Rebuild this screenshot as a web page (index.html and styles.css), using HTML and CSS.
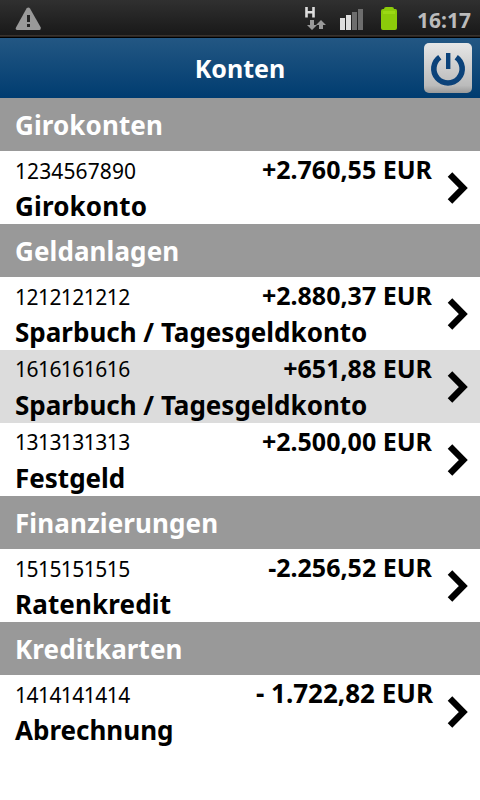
FILE: index.html
```html
<!DOCTYPE html>
<html lang="de">
<head>
    <meta charset="UTF-8">
    <meta name="viewport" content="width=device-width, initial-scale=1.0">
    <title>Konten</title>
    <link rel="stylesheet" href="styles.css">
</head>
<body>
    <!-- Status Bar -->
    <div class="status-bar">
        <svg class="icon-warning" width="26" height="24" viewBox="0 0 26 24">
            <path d="M11.500 1.5Q13.500 -.5 15 1.500L25.800 20.500Q26 22.800 24.500 23H2Q0 22.800 1 20.500Z" fill="#999"/>
            <path d="M12 8h3v7h-3zM12 17h3v3h-3z" fill="#222"/>
        </svg>
        <svg class="icon-network" width="24" height="26" viewBox="0 0 24 26">
            <path d="M3.500 2v10.500M10.500 2v10.500M3 7.200h8" stroke="#ddd" stroke-width="2.6" fill="none"/>
            <path d="M7 15h4v5h3l-5 5-5-5h3zM16 24h4v-4h3l-5-5-5 5h3z" fill="#999"/>
        </svg>
        <svg class="icon-signal" width="24" height="22" viewBox="0 0 24 22">
            <path d="M0 10h5V22H0zM6 7h5V22H6z" fill="#ddd"/>
            <path d="M12 4h5V22h-5zM18 1h5v21h-5z" fill="#6d6d6d"/>
        </svg>
        <svg class="icon-battery" width="18" height="25" viewBox="0 0 18 25">
            <path d="M4 3Q4 1 6 1h6q2 0 2 2h1.500Q17 3 17 5v17q0 2-2 2H3q-2 0-2-2V5q0-2 2-2z" fill="#8ccb0a"/>
            <path d="M3 5h12v3H3z" fill="#9bd814"/>
        </svg>
        <span class="clock">16:17</span>
    </div>

    <header class="header">
        <h1>Konten</h1>
        <button class="logout" aria-label="Abmelden">
            <svg width="48" height="50" viewBox="0 0 48 50">
                <path d="M15.800 14.200A14.200 14.200 0 1 0 32.200 14.200" fill="none" stroke="#0b427a" stroke-width="5.600"/>
                <path d="M22 10h4.400v16H22z" fill="#0b427a"/>
            </svg>
        </button>
    </header>

    <main class="accounts">
        <h2 class="section">Girokonten</h2>
        <div class="account">
            <span class="number wide">1234567890</span>
            <span class="amount">+2.760,55 EUR</span>
            <span class="name spaced">Girokonto</span>
            <svg class="chevron" viewBox="0 0 22 32"><path d="M3 2.500l13.300 13.500L3 29.500"/></svg>
        </div>

        <h2 class="section">Geldanlagen</h2>
        <div class="account">
            <span class="number">1212121212</span>
            <span class="amount">+2.880,37 EUR</span>
            <span class="name">Sparbuch / Tagesgeldkonto</span>
            <svg class="chevron" viewBox="0 0 22 32"><path d="M3 2.500l13.300 13.500L3 29.500"/></svg>
        </div>
        <div class="account alt">
            <span class="number raised">1616161616</span>
            <span class="amount">+651,88 EUR</span>
            <span class="name">Sparbuch / Tagesgeldkonto</span>
            <svg class="chevron" viewBox="0 0 22 32"><path d="M3 2.500l13.300 13.500L3 29.500"/></svg>
        </div>
        <div class="account">
            <span class="number raised">1313131313</span>
            <span class="amount">+2.500,00 EUR</span>
            <span class="name">Festgeld</span>
            <svg class="chevron" viewBox="0 0 22 32"><path d="M3 2.500l13.300 13.500L3 29.500"/></svg>
        </div>

        <h2 class="section">Finanzierungen</h2>
        <div class="account">
            <span class="number">1515151515</span>
            <span class="amount">-2.256,52 EUR</span>
            <span class="name spaced">Ratenkredit</span>
            <svg class="chevron" viewBox="0 0 22 32"><path d="M3 2.500l13.300 13.500L3 29.500"/></svg>
        </div>

        <h2 class="section">Kreditkarten</h2>
        <div class="account">
            <span class="number">1414141414</span>
            <span class="amount large">- 1.722,82 EUR</span>
            <span class="name">Abrechnung</span>
            <svg class="chevron" viewBox="0 0 22 32"><path d="M3 2.500l13.300 13.500L3 29.500"/></svg>
        </div>
    </main>
</body>
</html>
```

FILE: styles.css
```css
* {
    box-sizing: border-box;
}

body {
    font-family: 'Noto Sans', 'Open Sans', sans-serif;
    margin: 0;
    background: #fff;
    color: #000;
}

.status-bar {
    display: flex;
    align-items: flex-start;
    height: 38px;
    padding: 0 9px 0 15px;
    background: linear-gradient(#303030, #191919 35px, #574a40 36px, #000 37px);
}

.icon-warning {
    margin-top: 7px;
    margin-right: auto;
}

.icon-network {
    margin-top: 5px;
}

.icon-signal {
    margin: 8px 0 0 13px;
}

.icon-battery {
    margin: 6px 0 0 16px;
}

.clock {
    margin-left: 19px;
    font-size: 21px;
    font-weight: bold;
    line-height: 40px;
    color: #bbb;
}

.header {
    display: grid;
    grid-template-columns: 48px 1fr 48px;
    align-items: center;
    height: 60px;
    padding: 0 8px;
    background: linear-gradient(#235783, #003c70);
}

.header h1 {
    grid-column: 2;
    margin: 0;
    font-size: 25px;
    line-height: 60px;
    text-align: center;
    color: #fff;
}

.logout {
    width: 48px;
    height: 50px;
    padding: 0;
    border: none;
    border-radius: 5px;
    background: linear-gradient(#e6e6e6, #bbb 85%, #999);
}

.logout svg {
    display: block;
}

.section {
    height: 53px;
    margin: 0;
    padding-left: 15px;
    background: #999;
    color: #fff;
    font-size: 26px;
    line-height: 55px;
    letter-spacing: 0.1px;
}

.account {
    display: grid;
    grid-template-columns: auto 1fr 48px;
    grid-template-rows: 40px 33px;
    height: 73px;
    padding-left: 15px;
}

.account.alt {
    background: #dcdcdc;
}

.number {
    font-size: 21px;
    line-height: 41px;
    letter-spacing: -0.55px;
}

.number.wide {
    letter-spacing: 0.1px;
}

.number.raised {
    line-height: 39px;
}

.amount {
    font-size: 25px;
    font-weight: bold;
    line-height: 37px;
    text-align: right;
}

.amount.large {
    margin-right: -1px;
    font-size: 26px;
    line-height: 36px;
}

.name {
    grid-row: 2;
    grid-column: 1 / 3;
    font-size: 26px;
    font-weight: bold;
    line-height: 31px;
}

.name.spaced {
    letter-spacing: 0.15px;
}

.chevron {
    grid-row: 1 / 3;
    grid-column: 3;
    align-self: center;
    width: 22px;
    height: 32px;
    margin-left: 15px;
}

.chevron path {
    fill: none;
    stroke: #000;
    stroke-width: 6.4;
}
```
